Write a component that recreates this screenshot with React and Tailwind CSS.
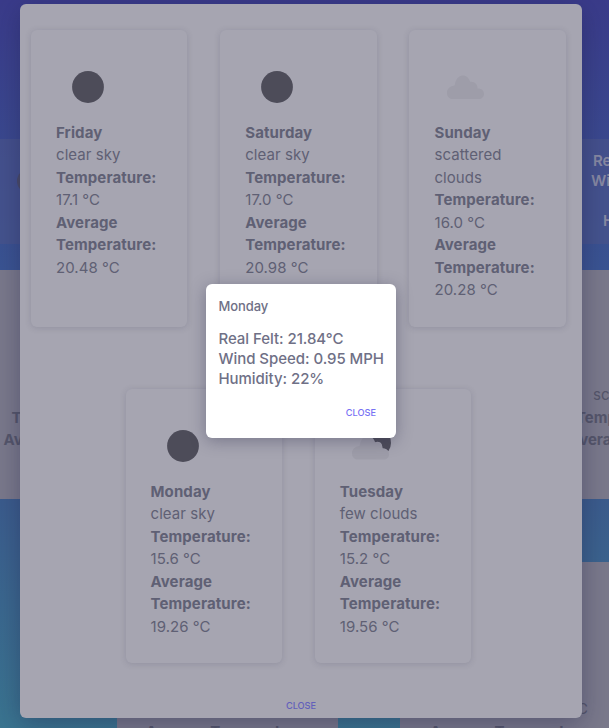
const forecast = [
  { day: "Friday", sky: "clear sky", temp: "17.1", avg: "20.48", icon: "clear" },
  { day: "Saturday", sky: "clear sky", temp: "17.0", avg: "20.98", icon: "clear" },
  { day: "Sunday", sky: "scattered clouds", temp: "16.0", avg: "20.28", icon: "scattered" },
  { day: "Monday", sky: "clear sky", temp: "15.6", avg: "19.26", icon: "clear" },
  { day: "Tuesday", sky: "few clouds", temp: "15.2", avg: "19.56", icon: "few" },
];

const cloud =
  "M18.500 43.500c-3.600 0-6-2.600-6-6.100 0-3.600 2.500-6.400 5.700-6.900 1.200 0 2-.3 2.200-1.400.5-4.500 3.600-9.100 7.900-9.100 3.600 0 6.300 2.600 7.300 6.200 4.500-.6 7.700 2.700 7.400 6.700 3.800-.2 6.500 2 6.500 5.300 0 3.100-2.300 5.300-5.300 5.300z";

function WeatherIcon({ type }) {
  return (
    <svg className="mb-[2.700px] block size-16" viewBox="0 0 64 64">
      {type === "clear" && <circle cx="32" cy="32" r="15.900" fill="#4d4c59" />}
      {type === "few" && (
        <>
          <path
            d="M31 21q0 5 3.700 7.700 2.500-1.500 5.300-.4 2.500 1.500 2.300 6 4-.2 6 3 2.700-3.500 2.700-8.300 0-8-6-12-8-4-14 4z"
            fill="#4d4c59"
          />
          <path d={cloud} transform="translate(-.5 2)" fill="#9e9da9" />
        </>
      )}
      {type === "scattered" && <path d={cloud} transform="translate(.5 .5)" fill="#9e9da9" />}
    </svg>
  );
}

function DayCard({ item }) {
  return (
    <article className="w-[156.300px] rounded-md bg-[#a6a5b1] p-[25px] text-[15px] leading-[22.500px] tracking-[0.060px] shadow-[0_1px_6px_rgba(50,50,80,0.17)]">
      <WeatherIcon type={item.icon} />
      <b className="block tracking-[0.110px]">{item.day}</b>
      <p>{item.sky}</p>
      <b className="block tracking-[0.110px]">Temperature:</b>
      <p>{item.temp} °C</p>
      <b className="block tracking-[0.110px]">Average Temperature:</b>
      <p>{item.avg} °C</p>
    </article>
  );
}

function Page() {
  return (
    <div className="flex h-full flex-col bg-linear-to-b from-[#3a3b8a] via-[#3b5b8c] via-68% to-[#3a7590] text-[15px] leading-[22.500px] text-[#55566a]">
      <header className="flex h-[270px] shrink-0 flex-col bg-linear-to-b from-[#3a3b8a] to-[#3a5492] pt-[139px]">
        <div className="flex h-[105px] items-start justify-between bg-[#48548b]/70 pt-3 font-semibold leading-5 text-[#8789a2]">
          <span className="ml-[17px] mt-[18px] size-6 rounded-full bg-[#4a4b68]" />
          <div className="-mr-[94px] w-[112px] whitespace-nowrap">
            <p className="ml-0.5">Real Felt:</p>
            <p>Wind Speed:</p>
            <p className="ml-3 mt-5">Humidity:</p>
          </div>
        </div>
      </header>
      <section className="flex h-[229px] shrink-0 justify-between bg-[#7a798b] pt-[114.200px]">
        <div className="ml-[3.500px] w-40 pt-[22.500px] font-bold">
          <p className="ml-2">Temperature:</p>
          <p>Average</p>
        </div>
        <div className="-mr-32 w-[168px] whitespace-nowrap font-bold">
          <p className="ml-6 font-normal">scattered clouds</p>
          <p className="ml-[7px]">Temperature:</p>
          <p>Average</p>
        </div>
      </section>
      <section className="flex min-h-0 flex-1 pl-[117px] pt-[63px]">
        <div className="w-[221px] bg-[#7a798b] pt-[158.500px] text-center font-bold">
          Average Temperature:
        </div>
        <div className="ml-[62px] w-[209px] bg-[#7a798b] pt-[136px]">
          <p className="pr-[21px] text-right">18.2 °C</p>
          <p className="pl-[30px] font-bold">Average Temperature:</p>
        </div>
      </section>
    </div>
  );
}

export default function App() {
  return (
    <main
      className="relative h-[728px] w-[609px] overflow-hidden"
      style={{ fontFamily: 'Inter, "Liberation Sans", sans-serif' }}
    >
      <Page />
      <div className="absolute inset-0 flex items-start pl-5 pt-1">
        <section className="flex h-[714px] w-[562px] flex-col rounded-md bg-[#a6a5b1] pt-[25.900px] text-[#5f6074] shadow-[0_6px_26px_rgba(30,30,70,0.38)]">
          <div className="flex gap-[32.950px] pl-[11px]">
            {forecast.slice(0, 3).map((item) => <DayCard key={item.day} item={item} />)}
          </div>
          <div className="mt-[62.400px] flex gap-[32.950px] pl-[105.500px]">
            {forecast.slice(3).map((item) => <DayCard key={item.day} item={item} />)}
          </div>
          <button className="mx-auto mt-[35px] text-[9.200px] font-medium leading-4 text-[#625fbb]">CLOSE</button>
        </section>
      </div>
      <div className="absolute inset-0 flex items-start pl-[206px] pt-[284px]">
        <section className="h-[154px] w-[190px] rounded-md bg-white px-[12.500px] pt-3 font-medium text-[#6f7086] shadow-[0_3px_16px_rgba(50,50,80,0.4)]">
          <h2 className="text-[13px] leading-5 tracking-[-0.080px]">Monday</h2>
          <div className="mt-[13px] whitespace-nowrap text-[15px] leading-5 tracking-[-0.050px]">
            <p>Real Felt: 21.84°C</p>
            <p>Wind Speed: 0.95 MPH</p>
            <p>Humidity: 22%</p>
          </div>
          <div className="mt-4 flex justify-end pr-[7.500px] text-[9.200px] leading-4 text-[#7872f4]">
            <button>CLOSE</button>
          </div>
        </section>
      </div>
    </main>
  );
}
